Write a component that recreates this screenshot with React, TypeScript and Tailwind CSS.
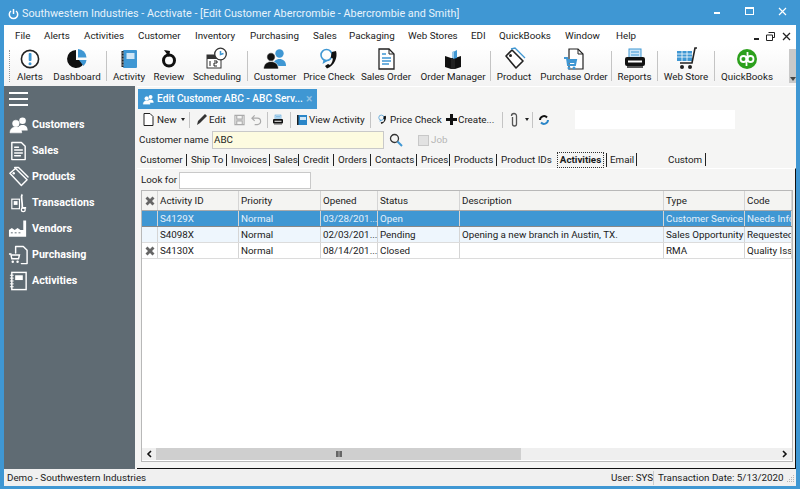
import React from "react";

const B = "#3f97d3";
const S = ({ children, s = 28, v = 28 }: { children: React.ReactNode; s?: number; v?: number }) => (
  <svg width={s} height={s} viewBox={`0 0 ${v} ${v}`} className="block shrink-0">{children}</svg>
);

const AlertsIcon = () => (
  <S><circle cx="14" cy="14" r="8.600" fill="#fff" stroke="#222" strokeWidth="1.600" /><rect x="12.700" y="8" width="2.800" height="8" rx="1" fill={B} /><circle cx="14" cy="18.700" r="1.500" fill={B} /></S>
);
const DashIcon = () => (
  <S><path d="M13 5a9 9 0 1 0 9 10h-9z" fill="#111" /><path d="M15 4a9 9 0 0 1 8.500 8.500H15z" fill={B} /><path d="M16 15h7.500a9 9 0 0 1-3 6z" fill={B} /></S>
);
const NotebookIcon = () => (
  <S><rect x="8" y="5" width="14" height="18" rx="1" fill={B} /><rect x="6.500" y="6" width="2" height="16" fill="#222" /><rect x="11.500" y="8" width="8" height="6" fill="#cfe6f6" /><path d="M6 8h3M6 11h3M6 14h3M6 17h3M6 20h3" stroke="#999" strokeWidth="1" /></S>
);
const ReviewIcon = () => (
  <S><circle cx="14" cy="15.500" r="5.500" fill="none" stroke="#111" strokeWidth="3" /><path d="M9 5l6 1-1 6z" fill="#111" /></S>
);
const SchedIcon = () => (
  <S><rect x="4" y="10" width="14" height="13" fill="#fff" stroke="#333" /><rect x="4" y="10" width="14" height="4" fill="#333" /><path d="M7 16v5M11 16h3v2h-3v3h3" stroke="#222" fill="none" /><circle cx="17.500" cy="9" r="5.800" fill="#fff" stroke="#333" strokeWidth="1.300" /><path d="M17.500 6v3.500l3-1" stroke={B} strokeWidth="1.500" fill="none" /></S>
);
const PeopleIcon = ({ a = "#111", b = B, s = 28 }: { a?: string; b?: string; s?: number }) => (
  <S s={s}><circle cx="18.500" cy="8.500" r="4.200" fill={b} /><path d="M12 21c0-5 3-7 6.500-7s6.500 2 6.500 7z" fill={b} /><circle cx="10" cy="12" r="4.200" fill={a} stroke="#fff" strokeWidth=".7" /><path d="M2.500 24c0-5 3.500-7.500 7.500-7.500s7.500 2.500 7.500 7.500z" fill={a} stroke="#fff" strokeWidth=".7" /></S>
);
const PhoneIcon = ({ s = 28 }: { s?: number }) => (
  <S s={s}><circle cx="11.500" cy="10" r="5.500" fill="none" stroke={B} strokeWidth="1.600" /><path d="M8.500 15l-1 4 5-3" fill={B} /><path d="M21 6c2 6-1.500 15-9 17.500l-2-2.500 3-2 2 1c2-2 2.800-4.500 2.800-6.500l-2-1 1-5.500z" fill="#111" /></S>
);
const DocIcon = () => (
  <S><path d="M7 4h10l5 5v15H7z" fill="#fff" stroke="#222" strokeWidth="1.300" /><path d="M17 4v5h5" fill="none" stroke="#222" /><path d="M10 9h4M10 13h9M10 16h9M10 19h7" stroke={B} strokeWidth="1.500" /></S>
);
const BoxIcon = () => (
  <S><path d="M6 11l6 2v11l-6-2zM22 11l-6 2v11l6-2z" fill="#111" /><rect x="12" y="13" width="4" height="11" fill="#222" /><path d="M14 7l4-2v8l-4 1z" fill={B} /><path d="M13 13V7l2-1v7z" fill="#9cc9e8" /></S>
);
const TagIcon = () => (
  <S><path d="M6 11l6-6 11 11-7 7z" fill="#fff" stroke="#222" strokeWidth="1.600" strokeLinejoin="round" /><circle cx="10.500" cy="10.500" r="1.500" fill="#222" /><path d="M11 4l4-1 10 10" fill="none" stroke={B} strokeWidth="1.300" /></S>
);
const POIcon = () => (
  <S><path d="M9 4h9l5 5v15H9z" fill="#fff" stroke="#222" strokeWidth="1.200" /><path d="M18 4v5h5" fill="none" stroke="#222" /><path d="M4 13h3l1 7h7l1-5H7" fill="none" stroke={B} strokeWidth="2" /><circle cx="9" cy="23" r="1.500" fill={B} /><circle cx="14" cy="23" r="1.500" fill={B} /><rect x="8" y="14" width="7" height="4" fill={B} /></S>
);
const PrinterIcon = ({ s = 28 }: { s?: number }) => (
  <S s={s}><rect x="8" y="4" width="12" height="9" fill="#cfe6f6" stroke={B} /><path d="M10 7h8M10 10h8" stroke={B} /><rect x="4" y="12" width="20" height="9" rx="2" fill="#111" /><rect x="7" y="15.500" width="14" height="2" fill="#fff" /><rect x="6" y="21" width="16" height="2" fill="#555" /></S>
);
const CartIcon = () => (
  <S><rect x="5" y="6" width="15" height="10" fill={B} /><path d="M5 9h15M5 12h15M10 6v10M15 6v10" stroke="#fff" strokeWidth=".8" /><path d="M25 3h-2l-3 15H8" fill="none" stroke="#222" strokeWidth="1.600" /><circle cx="10" cy="22" r="2" fill="#222" /><circle cx="18" cy="22" r="2" fill="#222" /></S>
);
const QbIcon = () => (
  <S><circle cx="14" cy="14" r="10" fill="#2ca01c" /><g fill="none" stroke="#fff" strokeWidth="1.800"><circle cx="10.500" cy="14" r="3" /><path d="M13.500 11v10" /><circle cx="17.500" cy="14" r="3" /><path d="M14.500 7v10" /></g></S>
);

const tools: ([string, React.ReactNode, number] | "sep")[] = [
  ["Alerts", <AlertsIcon />, 36],
  ["Dashboard", <DashIcon />, 58],
  "sep",
  ["Activity", <NotebookIcon />, 44],
  ["Review", <ReviewIcon />, 36],
  ["Scheduling", <SchedIcon />, 60],
  "sep",
  ["Customer", <PeopleIcon />, 54],
  ["Price Check", <PhoneIcon />, 54],
  ["Sales Order", <DocIcon />, 60],
  ["Order Manager", <BoxIcon />, 74],
  "sep",
  ["Product", <TagIcon />, 46],
  ["Purchase Order", <POIcon />, 74],
  "sep",
  ["Reports", <PrinterIcon />, 45],
  "sep",
  ["Web Store", <CartIcon />, 56],
  "sep",
  ["QuickBooks", <QbIcon />, 64],
];

const menus: [string, number][] = [["File", 29], ["Alerts", 40], ["Activities", 54], ["Customer", 57], ["Inventory", 55], ["Purchasing", 63], ["Sales", 36], ["Packaging", 59], ["Web Stores", 63], ["EDI", 28], ["QuickBooks", 66], ["Window", 51], ["Help", 30]];

const SW = (d: string) => <path d={d} fill="none" stroke="#fff" strokeWidth="1.500" strokeLinejoin="round" strokeLinecap="round" />;
const nav: [string, React.ReactNode][] = [
  ["Customers", <PeopleIcon a="#fff" b="#fff" s={22} />],
  ["Sales", <svg width="22" height="22" viewBox="0 0 22 22">{SW("M4 2h10l4 4v14H4z")}{SW("M7 7h4M7 10h8M7 13h8M7 16h6")}</svg>],
  ["Products", <svg width="22" height="22" viewBox="0 0 22 22">{SW("M2 7l6-5 12 12-6 6z")}{SW("M7 1l4 0 10 10")}<circle cx="6" cy="7" r="1.300" fill="#fff" /></svg>],
  ["Transactions", <svg width="22" height="22" viewBox="0 0 22 22"><rect x="4" y="7" width="8" height="10" fill="none" stroke="#fff" strokeWidth="1.200" /><path d="M15 2c-2 2 0 4 0 14h4" fill="none" stroke="#fff" strokeWidth="1.800" /><circle cx="16" cy="18" r="2" fill="none" stroke="#fff" strokeWidth="1.300" /><path d="M6 9h4v4H6z" fill="#fff" /></svg>],
  ["Vendors", <svg width="22" height="22" viewBox="0 0 22 22"><path d="M1 19v-7l3-2 3 2 3-2 3 2h3V2h3v17z" fill="#fff" /><path d="M3 15h2M7 15h2M11 15h2" stroke="#5f6b73" /></svg>],
  ["Purchasing", <svg width="22" height="22" viewBox="0 0 22 22">{SW("M8 2h8l4 4v14h-6M8 2v7")}<path d="M1 10h2l1 5h7l1-4H4" fill="none" stroke="#fff" strokeWidth="1.500" /><circle cx="5" cy="18" r="1.300" fill="#fff" /><circle cx="10" cy="18" r="1.300" fill="#fff" /></svg>],
  ["Activities", <svg width="22" height="22" viewBox="0 0 22 22"><rect x="4" y="2" width="15" height="18" fill="none" stroke="#fff" strokeWidth="1.500" /><rect x="7.500" y="5" width="8" height="5" fill="#fff" /><path d="M2 5h4M2 8h4M2 11h4M2 14h4M2 17h4" stroke="#fff" /></svg>],
];

const tabs: [string, number, boolean][] = [
  ["Customer", 51, true], ["Ship To", 40, true], ["Invoices", 43, true], ["Sales", 29, true], ["Credit", 35, true], ["Orders", 37, true], ["Contacts", 46, true], ["Prices", 33, true], ["Products", 47, true], ["Product IDs", 57, false],
];

const cols = "grid grid-cols-[16px_81px_82px_57px_82px_204px_81px_47px]";
const X = () => (
  <svg width="12" height="12" viewBox="0 0 12 12"><path d="M1.500 3.500l2-2L6 4l2.500-2.500 2 2L8 6l2.500 2.500-2 2L6 8l-2.500 2.500-2-2L4 6z" fill="#666" /></svg>
);
const Sep = ({ className = "" }: { className?: string }) => <div className={`w-px h-[16px] bg-[#c4c4c4] shrink-0 ${className}`} />;
const Lab = ({ w, children }: { w: number; children: React.ReactNode }) => (
  <span style={{ width: w }} className="shrink-0 whitespace-nowrap">{children}</span>
);

const rows = [
  { m: true, id: "S4129X", p: "Normal", o: "03/28/201...", s: "Open", d: "", t: "Customer Service", c: "Needs Info", sel: true },
  { m: false, id: "S4098X", p: "Normal", o: "02/03/201...", s: "Pending", d: "Opening a new branch in Austin, TX.", t: "Sales Opportunity", c: "Requested", alt: true },
  { m: true, id: "S4130X", p: "Normal", o: "08/14/201...", s: "Closed", d: "", t: "RMA", c: "Quality Iss" },
];

export default function App() {
  return (
    <div className="w-[800px] h-[489px] overflow-hidden flex flex-col bg-[#3f97d3] text-[#1a1a1a] font-['Roboto',sans-serif] text-[9.800px] leading-none">
      {/* title */}
      <div className="h-[25px] flex items-center pl-[8px] pt-[4px] text-[#e8f3fb] text-[10.800px] shrink-0">
        <svg width="11" height="11" viewBox="0 0 11 11" className="mr-[3px]"><path d="M3 2a4.200 4.200 0 1 0 5 0" fill="none" stroke="#fff" strokeWidth="1.500" /><path d="M5.500 0v5" stroke="#fff" strokeWidth="1.500" /></svg>
        <span className="whitespace-nowrap">Southwestern Industries - Acctivate - [Edit Customer Abercrombie - Abercrombie and Smith]</span>
        <div className="ml-auto flex items-center text-white -mt-[7px]">
          <div className="w-[6px] h-[2px] bg-white mr-[25px] mt-[4px]" />
          <div className="w-[9px] h-[8px] border border-white border-t-2 mr-[24px]" />
          <svg width="9" height="9" viewBox="0 0 9 9" className="mr-[13px]"><path d="M1 1l7 7M8 1L1 8" stroke="#fff" strokeWidth="1.200" /></svg>
        </div>
      </div>

      <div className="flex-1 flex flex-col mx-[4px] min-h-0 bg-[#f5f5f4]">
        {/* menu */}
        <div className="h-[21px] bg-white flex items-center pl-[11px] pt-px shrink-0">
          {menus.map(([m, w]) => <div key={m} style={{ width: w }} className="shrink-0 whitespace-nowrap">{m}</div>)}
          <div className="ml-auto flex items-center gap-[7px] pr-[5px] text-[#222]">
            <div className="w-[5px] h-[2px] bg-[#222] mt-[5px]" />
            <svg width="9" height="9" viewBox="0 0 9 9"><path d="M2.500.5h6v5h-2M.5 3h6v5.500h-6z" fill="none" stroke="#222" /></svg>
            <svg width="9" height="9" viewBox="0 0 9 9"><path d="M1 1l7 7M8 1L1 8" stroke="#222" strokeWidth="1.300" /></svg>
          </div>
        </div>
        {/* toolbar */}
        <div className="h-[40px] bg-gradient-to-b from-white to-[#f3f3f3] flex items-center pl-[5px] shrink-0 relative">
          <div className="w-[2px] h-[32px] mr-[1px] border-l border-dotted border-[#999] shrink-0" />
          {tools.map((t, i) =>
            t === "sep" ? (
              <div key={i} className="w-px h-[30px] bg-[#c4c4c4] shrink-0" />
            ) : (
              <div key={t[0]} style={{ width: t[2] }} className="flex flex-col items-center shrink-0 h-[40px] justify-end pb-[4px]">
                <div className="h-[24px] flex items-center justify-center">{t[1]}</div>
                <div className="whitespace-nowrap mt-[1px]">{t[0]}</div>
              </div>
            )
          )}
          <div className="absolute right-0 top-[3px] w-[7px] h-[34px] bg-[#c9c9c9] flex flex-col items-center justify-end pb-[2px]">
            <div className="w-0 h-0 border-x-[3px] border-x-transparent border-t-[4px] border-t-[#444]" />
          </div>
        </div>

        <div className="flex-1 flex min-h-0">
          {/* sidebar */}
          <div className="w-[131px] bg-[#5f6b73] shrink-0 flex flex-col pl-[4px] text-white font-bold text-[10.700px]">
            <div className="h-[26px] flex flex-col justify-center gap-[4px] pl-[1px]">
              <div className="w-[19px] h-[2px] bg-white" /><div className="w-[19px] h-[2px] bg-white" /><div className="w-[19px] h-[2px] bg-white" />
            </div>
            {nav.map(([n, ic]) => (
              <div key={n} className="h-[26px] flex items-center gap-[3px]">
                <div className="w-[21px] flex justify-center">{ic}</div>
                <span>{n}</span>
              </div>
            ))}
          </div>
          {/* main */}
          <div className="flex-1 min-w-0 flex flex-col ml-[2px] bg-[#f5f5f4] border-b border-[#111]">
            {/* doc tab */}
            <div className="h-[24px] shrink-0 pt-[2px] pl-px border-t border-white">
              <div className="w-[179px] h-[20px] bg-[#3f97d3] flex items-center pl-[4px] gap-[2px] text-white font-medium text-[10.200px]">
                <PeopleIcon a="#fff" b="#fff" s={13} />
                <Lab w={147}>Edit Customer ABC - ABC Serv...</Lab>
                <span className="text-[#8fc0e2] text-[12px]">×</span>
              </div>
            </div>
            {/* action bar */}
            <div className="h-[19px] flex items-center pl-[6px] shrink-0">
              <svg width="11" height="13" viewBox="0 0 11 13" className="shrink-0"><path d="M1 .5h6l3 3v9H1z" fill="#fff" stroke="#222" /></svg>
              <Lab w={27}><span className="ml-[3px]">New</span></Lab>
              <div className="w-0 h-0 border-x-[2.500px] border-x-transparent border-t-[3px] border-t-[#222] shrink-0" />
              <Sep className="ml-[4px]" />
              <svg width="12" height="13" viewBox="0 0 12 13" className="ml-[6px] shrink-0"><path d="M1 12l1-4 7-7 2 2-7 7z" fill="#333" /></svg>
              <Lab w={26}><span className="ml-px">Edit</span></Lab>
              <svg width="11" height="12" viewBox="0 0 12 12" className="shrink-0"><path d="M1 1h10v10H1zM3 1v4h6V1M3 11V7h6v4" fill="none" stroke="#aaa" strokeWidth="1.200" /></svg>
              <svg width="11" height="12" viewBox="0 0 12 12" className="ml-[6px] shrink-0"><path d="M4 1L1 4l3 3M1 4h6a3 3 0 0 1 0 7H4" fill="none" stroke="#aaa" strokeWidth="1.300" /></svg>
              <Sep className="ml-[5px]" />
              <div className="ml-[3px]"><PrinterIcon s={14} /></div>
              <Sep className="ml-[5px]" />
              <svg width="12" height="12" viewBox="0 0 12 12" className="ml-[5px] shrink-0"><rect x="1" y="1" width="10" height="10" fill="#2a86c8" /><rect x="4" y="3" width="6" height="3" fill="#cfe6f6" /><rect x="1" y="1" width="1.500" height="10" fill="#222" /></svg>
              <Lab w={62}><span className="ml-px">View Activity</span></Lab>
              <Sep />
              <div className="ml-[5px]"><PhoneIcon s={13} /></div>
              <Lab w={57}><span className="ml-px">Price Check</span></Lab>
              <svg width="11" height="11" viewBox="0 0 11 11" className="shrink-0"><path d="M4 0h3v4h4v3H7v4H4V7H0V4h4z" fill="#111" /></svg>
              <Lab w={45}><span className="ml-px">Create...</span></Lab>
              <Sep />
              <svg width="12" height="15" viewBox="0 0 12 15" className="ml-[5px] shrink-0"><path d="M4 4v7a2 2 0 0 0 4 0V3a2.500 2.500 0 0 0-5 0" fill="none" stroke="#555" strokeWidth="1.300" transform="translate(.5 1)" /></svg>
              <div className="ml-[5px] w-0 h-0 border-x-[2.500px] border-x-transparent border-t-[3px] border-t-[#222] shrink-0" />
              <Sep className="ml-[3px]" />
              <svg width="12" height="12" viewBox="0 0 12 12" className="ml-[5px] shrink-0"><path d="M2 6a4 4 0 0 1 7-2.500" fill="none" stroke="#111" strokeWidth="2" /><path d="M10 6a4 4 0 0 1-7 2.500" fill="none" stroke="#2a86c8" strokeWidth="2" /></svg>
              <div className="ml-[25px] w-[160px] h-[19px] bg-white shrink-0" />
            </div>
            {/* customer name */}
            <div className="h-[22px] flex items-center pl-[2px] shrink-0">
              <Lab w={73}>Customer name</Lab>
              <div className="w-[172px] h-[18px] bg-[#fdfbe0] border border-[#c9c9c9] flex items-center pl-[1px]">ABC</div>
              <svg width="14" height="14" viewBox="0 0 14 14" className="ml-[5px]"><circle cx="5.500" cy="5.500" r="4" fill="none" stroke="#333" strokeWidth="1.300" /><path d="M8.500 8.500l4.500 4.500" stroke="#3f97d3" strokeWidth="2" /></svg>
              <div className="ml-[15px] w-[11px] h-[11px] bg-[#e2e2e2] border border-[#c8c8c8]" />
              <span className="ml-[2px] text-[#b5b5b5]">Job</span>
            </div>
            {/* tabs */}
            <div className="h-[17px] flex items-start pt-[2px] pl-[3px] shrink-0">
              {tabs.map(([t, w, sep]) => (
                <div key={t} style={{ width: w }} className="h-[14px] flex items-center justify-between shrink-0 pr-[4px]">
                  <span className="whitespace-nowrap">{t}</span>
                  {sep && <span className="w-px h-[12px] bg-[#222]" />}
                </div>
              ))}
              <div className="font-bold w-[45px] outline-1 outline-dotted outline-[#333] h-[14px] flex items-center justify-center shrink-0">Activities</div>
              <span className="w-px h-[14px] bg-[#222] ml-[3px] shrink-0" />
              <div className="w-[26px] ml-[3px] h-[14px] flex items-center shrink-0">Email</div>
              <span className="w-px h-[13px] bg-[#222] shrink-0" />
              <div className="ml-[31px] w-[37px] h-[14px] flex items-center shrink-0">Custom</div>
              <span className="w-px h-[13px] bg-[#222] shrink-0" />
            </div>
            {/* lower area */}
            <div className="flex-1 min-h-0 flex flex-col border-t border-r border-t-white border-r-[#111]">
              <div className="h-[21px] flex items-center pl-[4px] pt-[1px] shrink-0">
                <Lab w={38}>Look for</Lab>
                <div className="w-[132px] h-[17px] bg-white border border-[#c9c9c9]" />
              </div>
              {/* grid */}
              <div className="flex-1 min-h-0 ml-[4px] mr-[2px] mb-[6px] border border-[#b8b8b8] bg-white flex flex-col">
                <div className={`${cols} h-[20px] bg-[#f4f4f2] border-b border-[#aaa] shrink-0`}>
                  <div className="flex items-center justify-center border-r border-[#d5d5d5]"><X /></div>
                  {["Activity ID", "Priority", "Opened", "Status", "Description", "Type", "Code"].map((h) => (
                    <div key={h} className="flex items-center pl-[2px] border-r border-[#d5d5d5]">{h}</div>
                  ))}
                </div>
                {rows.map((r) => (
                  <div key={r.id} className={`${cols} h-[16px] shrink-0 border-b ${r.sel ? "bg-[#3f97d3] text-[#e3f0fa] border-[#888]" : r.alt ? "bg-[#eef6fd] border-[#dcdcdc]" : "bg-white border-[#dcdcdc]"}`}>
                    <div className="flex items-center justify-center border-r border-[#d5d5d5]">{r.m && !r.sel && <X />}</div>
                    {[r.id, r.p, r.o, r.s, r.d, r.t, r.c].map((c, i) => (
                      <div key={i} className="flex items-center pl-[2px] border-r border-[#d5d5d5] overflow-hidden whitespace-nowrap">{c}</div>
                    ))}
                  </div>
                ))}
                <div className="flex-1" />
                <div className="h-[14px] bg-[#efefef] flex items-center shrink-0 border-y border-white">
                  <div className="w-[14px] flex justify-center"><svg width="6" height="8" viewBox="0 0 6 8"><path d="M5 1L2 4l3 3" fill="none" stroke="#111" strokeWidth="1.600" /></svg></div>
                  <div className="w-[365px] h-full bg-[#cfcfcf] flex items-center justify-center"><div className="w-[6px] h-[6px] border-x-2 border-[#666] bg-[#888]" /></div>
                  <div className="ml-auto w-[14px] flex justify-center"><svg width="6" height="8" viewBox="0 0 6 8"><path d="M1 1l3 3-3 3" fill="none" stroke="#111" strokeWidth="1.600" /></svg></div>
                </div>
              </div>
            </div>
          </div>
        </div>
        {/* status */}
        <div className="h-[17px] bg-[#f0f0f0] flex items-center pl-[3px] shrink-0">
          <span>Demo - Southwestern Industries</span>
          <div className="ml-auto flex items-center">
            <Lab w={42}>User: SYS</Lab>
            <span className="w-px h-[14px] bg-[#ccc]" />
            <Lab w={123}><span className="ml-[4px]">Transaction Date: 5/13/2020</span></Lab>
            <svg width="19" height="14" viewBox="0 0 19 14" className="shrink-0"><g fill="#b5b5b5"><rect x="16" y="4" width="1" height="1" /><rect x="14" y="6" width="1" height="1" /><rect x="16" y="6" width="1" height="1" /><rect x="12" y="8" width="1" height="1" /><rect x="14" y="8" width="1" height="1" /><rect x="16" y="8" width="1" height="1" /><rect x="10" y="10" width="1" height="1" /><rect x="12" y="10" width="1" height="1" /><rect x="14" y="10" width="1" height="1" /><rect x="16" y="10" width="1" height="1" /></g></svg>
          </div>
        </div>
      </div>
      <div className="h-[3px] shrink-0" />
    </div>
  );
}
